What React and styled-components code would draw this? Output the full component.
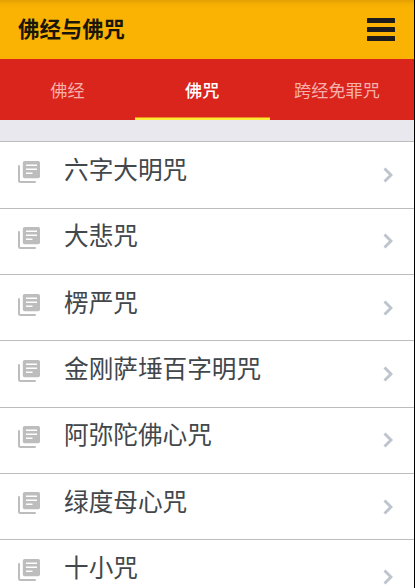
import React from "react";
import styled, { createGlobalStyle } from "styled-components";

const tabs = ["佛经", "佛咒", "跨经免罪咒"];

const mantras = [
    { title: "六字大明咒" },
    { title: "大悲咒" },
    { title: "楞严咒" },
    { title: "金刚萨埵百字明咒" },
    { title: "阿弥陀佛心咒" },
    { title: "绿度母心咒" },
    { title: "十小咒", tall: true },
];

const BooksIcon = () => (
    <svg width="22" height="22" viewBox="0 0 22 22" fill="none">
        <path d="M1 5V19.5Q1 21 2.5 21H17" stroke="#bdbdbd" strokeWidth="2" strokeLinecap="round" />
        <rect x="4.8" y="0" width="17.2" height="17.2" rx="1.8" fill="#bdbdbd" />
        <path d="M8 4.2H19M8 8.2H19M8 12.3H14.5" stroke="#fff" strokeWidth="1.6" />
    </svg>
)

const ArrowIcon = () => (
    <svg width="10" height="16" viewBox="0 0 10 16" fill="none">
        <path d="M1.5 1.5L8 8L1.5 14.5" stroke="#bdc4cd" strokeWidth="2.9" />
    </svg>
)

const App = () => {
    return(
        <>
            <GlobalStyle />
            <Screen>
                <Header>
                    <Title>佛经与佛咒</Title>
                    <MenuButton aria-label="menu">
                        <span />
                        <span />
                        <span />
                    </MenuButton>
                </Header>
                <TabBar>
                    {tabs.map((tab, index) => (
                        <Tab key={tab} $active={index === 1}>{tab}</Tab>
                    ))}
                </TabBar>
                <List>
                    {mantras.map(({ title, tall }) => (
                        <Row key={title} $tall={tall}>
                            <RowIcon><BooksIcon /></RowIcon>
                            <RowTitle>{title}</RowTitle>
                            <RowArrow><ArrowIcon /></RowArrow>
                        </Row>
                    ))}
                </List>
            </Screen>
        </>
    )
}

const GlobalStyle = createGlobalStyle`
*{
  box-sizing: border-box;
}

body{
  margin: 0;
  overflow: hidden;
  font-family: "Noto Sans CJK SC", sans-serif;
}
`

const Screen = styled.div`
  width: 415px;
  height: 588px;
  overflow: hidden;
  background: #e8e8ee;
  border-right: 1px solid #000;
`

const Header = styled.header`
  height: 59px;
  padding: 0 19px 0 18px;
  display: flex;
  align-items: center;
  justify-content: space-between;
  background: linear-gradient(#e3a004 0, #f5ae02 4px, #fbb303 9px);
`

const Title = styled.h1`
  margin: 0;
  padding-bottom: 3px;
  font-size: 21.4px;
  font-weight: 700;
  line-height: 30px;
  color: #1b1708;
`

const MenuButton = styled.button`
  width: 28px;
  padding: 0;
  border: 0;
  background: none;
  display: grid;
  gap: 4px;

  span{
    height: 5px;
    border-radius: 0.5px;
    background: #1c1c1c;
  }
`

const TabBar = styled.nav`
  height: 61px;
  display: grid;
  grid-template-columns: 135px 134.5px 135px;
  background: #da251c;
`

/**the underline of the active tab has a darker top edge */
const Tab = styled.div`
  display: flex;
  align-items: center;
  justify-content: center;
  padding: 3px 0;
  box-shadow: ${({ $active }) => ($active ? "inset 0 -2px #fdea35, inset 0 -3px #ee8a22" : "none")};
  font-size: 17.2px;
  font-weight: ${({ $active }) => ($active ? 500 : 400)};
  color: ${({ $active }) => ($active ? "#fff" : "#f5b0ac")};
  white-space: nowrap;
`

const List = styled.ul`
  margin: 21px 0 0;
  padding: 0.4px 0 0;
  list-style: none;
  background: #fff;
`

const Row = styled.li`
  height: ${({ $tall }) => ($tall ? "75px" : "66.3px")};
  border-top: 1px solid #bcbcbc;
  padding: 0 21px 0 18px;
  display: grid;
  grid-template-columns: 46px 1fr 10px;
`

const RowIcon = styled.span`
  padding-top: 18.6px;

  svg{
    display: block;
  }
`

const RowTitle = styled.span`
  padding-top: 7.8px;
  font-size: 24.65px;
  line-height: 36px;
  color: #42474b;
`

const RowArrow = styled.span`
  align-self: center;

  svg{
    display: block;
  }
`

export default App;
